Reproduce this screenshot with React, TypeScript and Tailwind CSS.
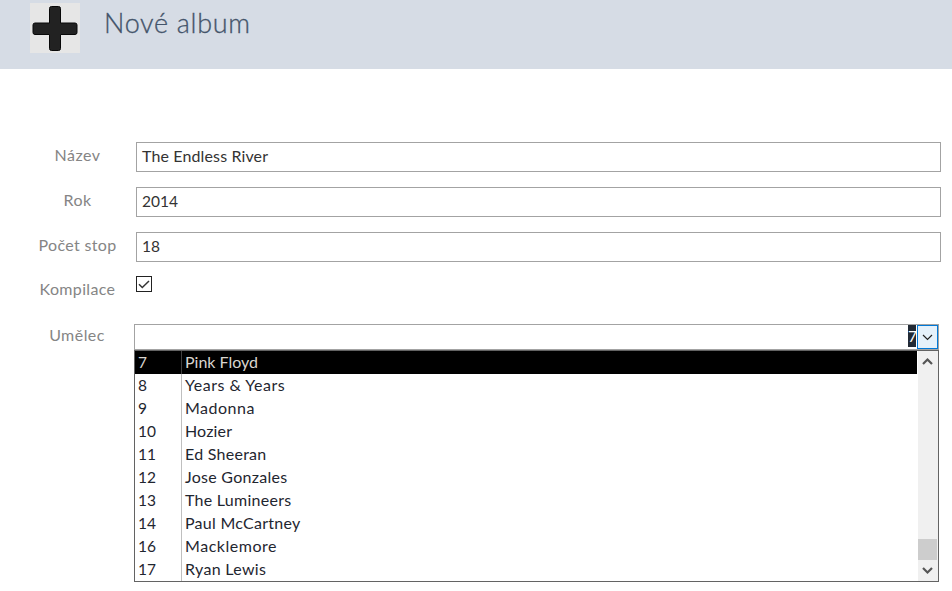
const fields = [
  { label: 'Název', value: 'The Endless River', labelTracking: 'tracking-[0.45px]', tracking: 'text-[16px] tracking-[0.13px]' },
  { label: 'Rok', value: '2014', labelTracking: 'tracking-[0.4px]', tracking: 'tracking-normal' },
  { label: 'Počet stop', value: '18', labelTracking: 'tracking-[0.35px]', tracking: 'tracking-normal' },
];

const artists = [
  { id: 7, name: 'Pink Floyd', tracking: 'tracking-normal' },
  { id: 8, name: 'Years & Years', tracking: 'tracking-[0.5px]' },
  { id: 9, name: 'Madonna', tracking: 'tracking-[0.5px]' },
  { id: 10, name: 'Hozier', tracking: 'tracking-[0.15px]' },
  { id: 11, name: 'Ed Sheeran', tracking: 'tracking-[0.26px]' },
  { id: 12, name: 'Jose Gonzales', tracking: 'tracking-[0.26px]' },
  { id: 13, name: 'The Lumineers', tracking: 'tracking-[0.26px]' },
  { id: 14, name: 'Paul McCartney', tracking: 'tracking-[0.27px]' },
  { id: 16, name: 'Macklemore', tracking: 'tracking-[0.53px]' },
  { id: 17, name: 'Ryan Lewis', tracking: 'tracking-[0.3px]' },
];

function Header() {
  return (
    <header className="flex h-[69px] items-start bg-[#d6dce5] pl-[30px] pt-[3px]">
      <svg width="50" height="50" viewBox="0 0 50 50" className="shrink-0">
        <rect width="50" height="50" fill="#e6e6e6" />
        <path
          d="M21.500 3.500h7a2 2 0 0 1 2 2V20H45a2 2 0 0 1 2 2V29.500a2 2 0 0 1-2 2H30.500V45.500a2 2 0 0 1-2 2H21.500a2 2 0 0 1-2-2V31.500H5a2 2 0 0 1-2-2V22a2 2 0 0 1 2-2H19.500V5.500a2 2 0 0 1 2-2z"
          fill="#222"
          stroke="#080808"
        />
      </svg>
      <h1 className="ml-6 pt-1 text-[27px] font-light leading-[31px] tracking-[0.7px] text-[#44546a] [-webkit-text-stroke:0.3px_#44546a]">
        Nové album
      </h1>
    </header>
  );
}

function ArtistList() {
  return (
    <div className="flex h-[232px] w-[805px] border border-[#636363] bg-white text-[#1f2630]">
      <div className="w-[783px]">
        {artists.map((artist, i) => (
          <div
            key={artist.id}
            className={i === 0 ? 'mr-px flex h-[23px] bg-black leading-[23px] text-[#d9d5cf]' : 'flex h-[23px] leading-[23px]'}
          >
            <div className={i === 0 ? 'w-[47px] border-r border-[#404040] pl-[3px]' : 'w-[47px] border-r border-[#bfbfbf] pl-[3px]'}>
              {artist.id}
            </div>
            <div className={`pl-[3px] text-[16px] leading-[21px] ${artist.tracking}`}>{artist.name}</div>
          </div>
        ))}
      </div>
      <div className="flex w-5 flex-col bg-[#f0f0f0]">
        <svg width="20" height="20" viewBox="0 0 20 20" fill="none" stroke="#555" strokeWidth="2.200">
          <path d="M5 13l4.500-4.500L14 13" />
        </svg>
        <div className="mt-[168px] h-[21px] w-[19px] bg-[#cdcdcd]" />
        <svg width="20" height="20" viewBox="0 0 20 20" fill="none" stroke="#555" strokeWidth="2.200">
          <path d="M5 8l4.500 4.500L14 8" />
        </svg>
      </div>
    </div>
  );
}

export default function App() {
  return (
    <div className="h-[591px] w-[952px] overflow-hidden bg-white font-['Lato','Liberation_Sans',sans-serif] text-[15.5px]">
      <Header />
      <main className="pt-[73px]">
        {fields.map((f) => (
          <div key={f.label} className="mb-[15px] flex h-[30px] leading-[26px]">
            <div className={`ml-[19px] w-[117px] shrink-0 text-center text-[16px] leading-[26px] text-[#858585] ${f.labelTracking}`}>{f.label}</div>
            <div className={`w-[805px] border border-[#a3a3a3] pl-[5px] leading-[26px] text-[#333] ${f.tracking}`}>{f.value}</div>
          </div>
        ))}
        <div className="flex h-[47px] items-start">
          <div className="ml-[19px] w-[117px] text-center text-[16px] leading-6 tracking-[0.35px] text-[#858585]">Kompilace</div>
          <div className="mt-[-1px] h-4 w-4 border border-[#222]">
            <svg width="14" height="14" viewBox="0 0 14 14" fill="none" stroke="#333" strokeWidth="1.500">
              <path d="M2 7.300l3.300 3.200L12 4" />
            </svg>
          </div>
        </div>
        <div className="flex">
          <div className="ml-[19px] w-[115px] pl-px text-center text-[16px] leading-[21px] tracking-[0.45px] text-[#858585]">Umělec</div>
          <div>
            <div className="flex h-[26px] w-[805px] justify-end border border-[#a3a3a3]">
              <div className="h-[22px] w-2 bg-[#222a35] text-center leading-[23px] text-white">7</div>
              <div className="ml-[1px] flex h-6 w-[21px] items-center justify-center border border-[#0078d7] bg-[#e5f1fb]">
                <svg width="11" height="7" viewBox="0 0 11 7" fill="none" stroke="#222" strokeWidth="1.200">
                  <path d="M1 1l4.500 4.500L10 1" />
                </svg>
              </div>
            </div>
            <ArtistList />
          </div>
        </div>
      </main>
    </div>
  );
}
